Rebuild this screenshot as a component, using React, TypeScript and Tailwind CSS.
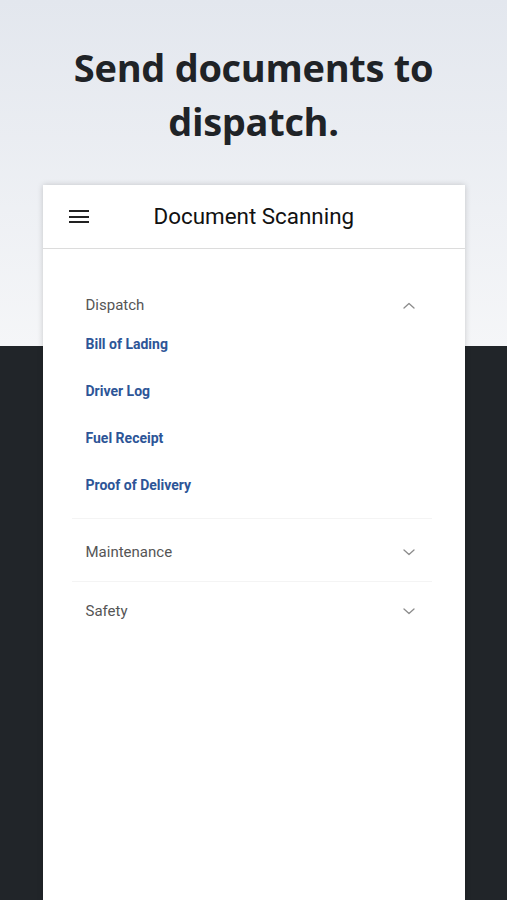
import { useState } from "react";

const dispatchDocs = ["Bill of Lading", "Driver Log", "Fuel Receipt", "Proof of Delivery"];

function Chevron({ up }: { up?: boolean }) {
  return (
    <svg width="12" height="7" viewBox="0 0 12 7" fill="none" className="mr-[17px]">
      <polyline
        points={up ? "1,6 6,1.5 11,6" : "1,1 6,5.5 11,1"}
        stroke="#8c8c8c"
        strokeWidth="1.3"
        strokeLinecap="round"
        strokeLinejoin="round"
      />
    </svg>
  );
}

export default function App() {
  const [open, setOpen] = useState("Dispatch");

  return (
    <div className="h-[900px] overflow-hidden flex flex-col items-center bg-[linear-gradient(to_bottom,#e3e7ee_0px,#f5f6f8_346px,#212529_346px)] font-['Roboto',sans-serif]">
      {/* Headline */}
      <h1 className="pt-[40px] text-center text-[38px] leading-[54px] font-bold text-[#1f2327] font-['Open_Sans',sans-serif] tracking-[-0.3px]">
        Send documents to
        <br />
        dispatch.
      </h1>

      {/* Phone card */}
      <div className="mt-[37px] w-[422px] flex-1 bg-white flex flex-col shadow-[0_0_6px_rgba(0,0,0,0.18)]">
        <div className="h-[64px] flex items-center border-b border-[#dcdcdc] shrink-0">
          <div className="ml-[26px] w-[20px] flex flex-col gap-[3.5px]">
            <span className="h-[2px] bg-[#222]" />
            <span className="h-[2px] bg-[#222]" />
            <span className="h-[2px] bg-[#222]" />
          </div>
          <span className="ml-[65px] text-[22.4px] text-[#111]">Document Scanning</span>
        </div>

        <div className="ml-[29px] mr-[33px] pt-[41px]">
          {/* Dispatch */}
          <div>
            <button
              onClick={() => setOpen(open === "Dispatch" ? "" : "Dispatch")}
              className="w-full h-[31px] flex items-center justify-between pl-[14px] text-[15px] text-[#555]"
            >
              Dispatch
              <Chevron up={open === "Dispatch"} />
            </button>
            {open === "Dispatch" && (
              <ul className="pb-[9px]">
                {dispatchDocs.map((d) => (
                  <li key={d} className="h-[47px] flex items-center pl-[14px] text-[14px] font-bold text-[#2d5597]">
                    {d}
                  </li>
                ))}
              </ul>
            )}
          </div>

          <div className="border-t border-[#f4f4f4]">
            <button
              onClick={() => setOpen(open === "Maintenance" ? "" : "Maintenance")}
              className="w-full h-[62px] pt-[4px] flex items-center justify-between pl-[14px] text-[15px] text-[#555]"
            >
              Maintenance
              <Chevron up={open === "Maintenance"} />
            </button>
          </div>

          <div className="border-t border-[#f4f4f4]">
            <button
              onClick={() => setOpen(open === "Safety" ? "" : "Safety")}
              className="w-full h-[58px] flex items-center justify-between pl-[14px] text-[15px] text-[#555]"
            >
              Safety
              <Chevron up={open === "Safety"} />
            </button>
          </div>
        </div>
      </div>
    </div>
  );
}
